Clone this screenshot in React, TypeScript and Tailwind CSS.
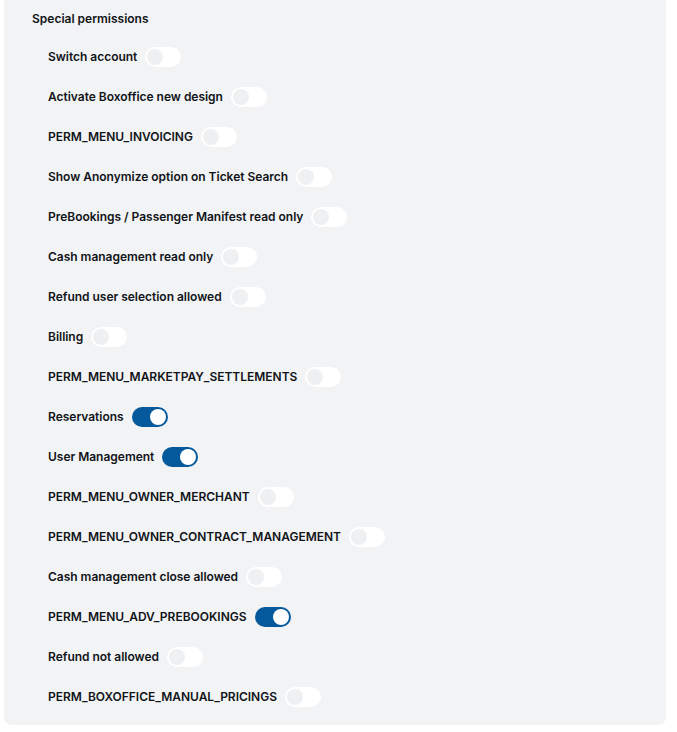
import React, { useState } from "react";

type Perm = { label: string; on: boolean };

const initial: Perm[] = [
  { label: "Switch account", on: false },
  { label: "Activate Boxoffice new design", on: false },
  { label: "PERM_MENU_INVOICING", on: false },
  { label: "Show Anonymize option on Ticket Search", on: false },
  { label: "PreBookings / Passenger Manifest read only", on: false },
  { label: "Cash management read only", on: false },
  { label: "Refund user selection allowed", on: false },
  { label: "Billing", on: false },
  { label: "PERM_MENU_MARKETPAY_SETTLEMENTS", on: false },
  { label: "Reservations", on: true },
  { label: "User Management", on: true },
  { label: "PERM_MENU_OWNER_MERCHANT", on: false },
  { label: "PERM_MENU_OWNER_CONTRACT_MANAGEMENT", on: false },
  { label: "Cash management close allowed", on: false },
  { label: "PERM_MENU_ADV_PREBOOKINGS", on: true },
  { label: "Refund not allowed", on: false },
  { label: "PERM_BOXOFFICE_MANUAL_PRICINGS", on: false },
];

function Toggle({ on, onClick }: { on: boolean; onClick: () => void }) {
  return (
    <button
      type="button"
      onClick={onClick}
      className={
        on
          ? "flex h-[20px] w-[36px] items-center justify-end rounded-full bg-[#03599b] px-[2px]"
          : "flex h-[20px] w-[36px] items-center justify-start rounded-full bg-white px-[2px]"
      }
    >
      <span
        className={
          on
            ? "block h-[16px] w-[16px] rounded-full bg-white"
            : "block h-[16px] w-[16px] rounded-full bg-[#eff0f2]"
        }
      />
    </button>
  );
}

export default function App() {
  const [perms, setPerms] = useState(initial);
  return (
    <div className="min-h-[732px] bg-white px-[4px] pb-[8px] font-['Inter',sans-serif] text-[#111418]">
      <div className="w-[662px] rounded-b-[8px] bg-[#f2f3f5] pb-[8px] pl-[28px] pt-[11px]">
        <div className="text-[12px] font-semibold leading-[16px]">Special permissions</div>
        <div className="mt-[10px] flex flex-col pl-[16px]">
          {perms.map((p, i) => (
            <div key={p.label} className="flex h-[40px] items-center gap-[8px]">
              <span className="text-[12px] font-semibold leading-[16px] tracking-[-0.02px]">{p.label}</span>
              <Toggle
                on={p.on}
                onClick={() =>
                  setPerms((prev) => prev.map((q, j) => (j === i ? { ...q, on: !q.on } : q)))
                }
              />
            </div>
          ))}
        </div>
      </div>
    </div>
  );
}
